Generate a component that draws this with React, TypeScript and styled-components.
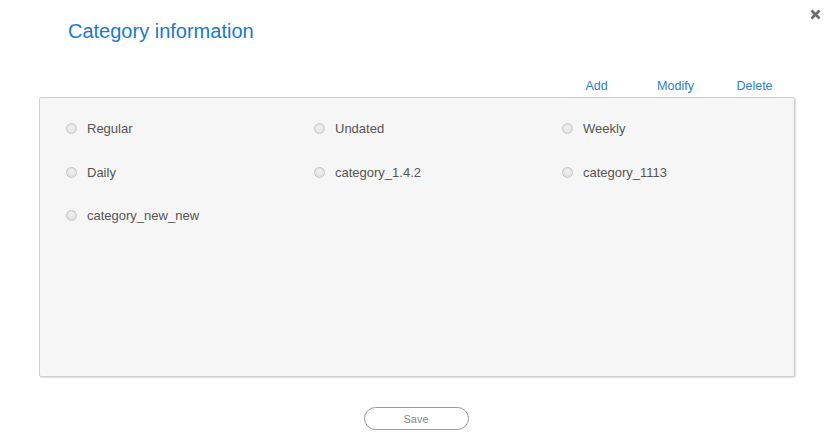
import React, { useState } from 'react';
import styled, { createGlobalStyle } from 'styled-components';

const categories = [
  'Regular',
  'Undated',
  'Weekly',
  'Daily',
  'category_1.4.2',
  'category_1113',
  'category_new_new',
];

const GlobalStyle = createGlobalStyle`
  html, body {
    margin: 0;
    padding: 0;
    background: #ffffff;
    font-family: "Liberation Sans", Arial, sans-serif;
  }
`;

const App: React.FC = () => {
  const [selected, setSelected] = useState<string | null>(null);

  return (
    <>
      <GlobalStyle />
      <Dialog>
        <Header>
          <Title>Category information</Title>
          <CloseButton aria-label="close">
            <svg width="11" height="11" viewBox="0 0 11 11">
              <path d="M1.5 1.5 L9.5 9.5 M9.5 1.5 L1.5 9.5" stroke="#6b6b6b" strokeWidth="2.6" />
            </svg>
          </CloseButton>
        </Header>
        <Actions>
          <ActionLink>Add</ActionLink>
          <ActionLink>Modify</ActionLink>
          <ActionLink>Delete</ActionLink>
        </Actions>
        <Panel>
          <Grid>
            {categories.map((name) => (
              <Option key={name} onClick={() => setSelected(name)}>
                <Radio checked={selected === name} />
                <Label>{name}</Label>
              </Option>
            ))}
          </Grid>
        </Panel>
        <Footer>
          <SaveButton>Save</SaveButton>
        </Footer>
      </Dialog>
    </>
  );
};
export default App;

const Dialog = styled.div`
  width: 832px;
  height: 443px;
  display: flex;
  flex-direction: column;
  box-sizing: border-box;
`;

const Header = styled.div`
  position: relative;
  padding: 19px 0 0 68px;
  height: 59px;
  box-sizing: border-box;
`;

const Title = styled.h1`
  margin: 0;
  font-size: 20px;
  font-weight: normal;
  color: #1a78cf;
  line-height: 24px;
`;

const CloseButton = styled.div`
  position: absolute;
  top: 9px;
  right: 11px;
  width: 11px;
  height: 11px;
  display: flex;
  cursor: pointer;
`;

const Actions = styled.div`
  display: flex;
  justify-content: flex-end;
  padding: 20px 38px 0 0;
  height: 38px;
  box-sizing: border-box;
`;

const ActionLink = styled.a`
  width: 79px;
  text-align: center;
  font-size: 12.5px;
  line-height: 14px;
  color: #2a7fd4;
  cursor: pointer;
`;

const Panel = styled.div`
  margin: 0 37px 0 39px;
  height: 280px;
  box-sizing: border-box;
  background: #f6f6f6;
  border: 1px solid #cfcfcf;
  border-radius: 2px;
  box-shadow: 1px 1px 1px #e0e0e0;
  padding: 20px 0 0 26px;
`;

const Grid = styled.div`
  display: grid;
  grid-template-columns: repeat(3, 248px);
  row-gap: 22.5px;
`;

const Option = styled.label`
  display: flex;
  align-items: center;
  height: 21px;
  cursor: pointer;
`;

const Radio = styled.span<{ checked: boolean }>`
  width: 11px;
  height: 11px;
  border-radius: 50%;
  box-sizing: border-box;
  border: 1px solid #c6c6c6;
  background: ${(p) => (p.checked ? '#1a78cf' : 'radial-gradient(circle at 50% 40%, #f2f2f2, #dadada)')};
  margin-right: 10px;
`;

const Label = styled.span`
  font-size: 13px;
  color: #555555;
`;

const Footer = styled.div`
  display: flex;
  justify-content: center;
  padding-top: 30px;
`;

const SaveButton = styled.button`
  width: 105px;
  height: 23px;
  border: 1px solid #9a9a9a;
  border-radius: 12px;
  background: #ffffff;
  color: #888888;
  font-family: "Liberation Sans", Arial, sans-serif;
  font-size: 11px;
  cursor: pointer;
`;
